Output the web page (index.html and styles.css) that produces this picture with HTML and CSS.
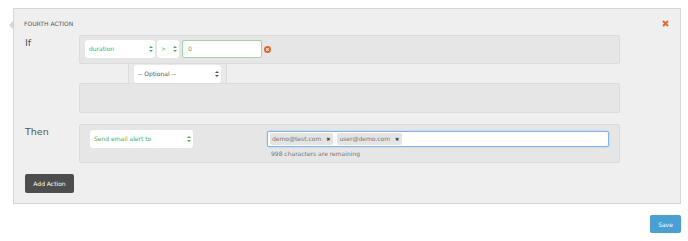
FILE: index.html
```html
<!DOCTYPE html>
<html lang="en">
<head>
  <meta charset="UTF-8">
  <title>Actions</title>
  <link rel="stylesheet" href="styles.css">
</head>
<body>
  <section class="action-panel">
    <div class="panel-head">
      <span class="panel-title">FOURTH ACTION</span>
      <span class="panel-close">
        <svg width="7" height="7" viewBox="0 0 7 7"><path d="M1 1L6 6M6 1L1 6" stroke="#e8672e" stroke-width="2"/></svg>
      </span>
    </div>

    <div class="rule-row">
      <div class="rule-label">If</div>
      <div class="rule-body">
        <div class="cond-box">
          <div class="select sel-field">duration<span class="arrows"></span></div>
          <div class="select sel-op">&gt;<span class="arrows"></span></div>
          <div class="value-input">0</div>
          <span class="remove-icon">
            <svg width="7" height="7" viewBox="0 0 8 8"><circle cx="4" cy="4" r="4" fill="#e8632b"/><path d="M2.6 2.6L5.4 5.4M5.4 2.6L2.6 5.4" stroke="#fff" stroke-width="1.2"/></svg>
          </span>
        </div>
        <div class="sub-row">
          <div class="select sel-optional">-- Optional --<span class="arrows grey"></span></div>
        </div>
        <div class="cond-box empty"></div>
      </div>
    </div>

    <div class="rule-row then-row">
      <div class="rule-label">Then</div>
      <div class="rule-body">
        <div class="then-box">
          <div class="select sel-action">Send email alert to<span class="arrows"></span></div>
          <div class="tags-col">
            <div class="tags-input">
              <span class="tag">demo@test.com <b>&#x2716;</b></span>
              <span class="tag">user@demo.com <b>&#x2716;</b></span>
            </div>
            <div class="help-text">998 characters are remaining</div>
          </div>
        </div>
      </div>
    </div>

    <button class="btn-dark">Add Action</button>
  </section>

  <div class="footer-bar">
    <button class="btn-save">Save</button>
  </div>
</body>
</html>
```

FILE: styles.css
```css
body {
  margin: 0;
  font-family: 'DejaVu Sans', Verdana, sans-serif;
  background: #fff;
  color: #555;
}
.action-panel {
  position: relative;
  margin: 8px 7px 0 13px;
  background: #efefef;
  border: 1px solid #d6d6d6;
  padding: 0 0 10px 10px;
}
.action-panel::before {
  content: '';
  position: absolute;
  left: -5px;
  top: 12px;
  border-top: 4px solid transparent;
  border-bottom: 4px solid transparent;
  border-right: 4px solid #d6d6d6;
}
.panel-head {
  display: flex;
  justify-content: space-between;
  align-items: center;
  padding: 10px 11px 6px 0;
  height: 10px;
}
.panel-title {
  font-size: 6px;
  color: #555;
  line-height: 10px;
}
.panel-close {
  display: flex;
  margin-top: -2px;
}
.rule-row {
  display: flex;
  align-items: flex-start;
}
.rule-label {
  width: 54px;
  padding: 2px 0 0 1px;
  font-size: 9.5px;
  line-height: 12px;
  color: #555;
}
.rule-body {
  width: 541px;
}
.cond-box {
  display: flex;
  align-items: center;
  height: 18px;
  padding: 4px 5px 5px;
  background: #e6e6e6;
  border: 1px solid #dcdcdc;
  border-radius: 2px;
}
.cond-box.empty {
  height: 18px;
  padding: 5px;
}
.select {
  position: relative;
  box-sizing: border-box;
  height: 18px;
  background: #fff;
  border-radius: 3px;
  font-size: 6px;
  line-height: 18px;
  color: #4caf50;
  padding-left: 4px;
}
.arrows {
  position: absolute;
  right: 4px;
  top: 6px;
  width: 0;
  height: 6px;
}
.arrows::before,
.arrows::after {
  content: '';
  position: absolute;
  left: -2px;
  border-left: 2px solid transparent;
  border-right: 2px solid transparent;
}
.arrows::before {
  top: 0;
  border-bottom: 2.5px solid #4caf50;
}
.arrows::after {
  bottom: 0;
  border-top: 2.5px solid #4caf50;
}
.arrows.grey::before { border-bottom-color: #555; }
.arrows.grey::after { border-top-color: #555; }
.sel-field { width: 70px; }
.sel-op { width: 22px; margin-left: 2px; }
.value-input {
  box-sizing: border-box;
  width: 80px;
  height: 18px;
  margin-left: 3px;
  padding-left: 5px;
  background: #fff;
  border: 1px solid #9fd5aa;
  border-radius: 2px;
  font-size: 6px;
  line-height: 16px;
  color: #4caf50;
}
.remove-icon {
  display: flex;
  margin-left: 2px;
}
.sub-row {
  box-sizing: border-box;
  width: 99px;
  height: 19px;
  margin-left: 49px;
  padding: 1px 5px 0;
  background: #e9e9e9;
  border-left: 1px solid #dcdcdc;
  border-right: 1px solid #dcdcdc;
}
.sel-optional {
  width: 87px;
  color: #555;
}
.then-row {
  margin-top: 11px;
}
.then-box {
  display: flex;
  align-items: flex-start;
  padding: 5px 10px 4px;
  background: #e6e6e6;
  border: 1px solid #dcdcdc;
  border-radius: 2px;
}
.sel-action {
  width: 103px;
  flex: none;
}
.tags-col {
  flex: 1;
  margin: 1px 0 0 74px;
}
.tags-input {
  display: flex;
  align-items: center;
  box-sizing: border-box;
  height: 16px;
  padding: 0 2px;
  gap: 4px;
  background: #fff;
  border: 1px solid #7fb6e6;
  border-radius: 2px;
  box-shadow: 0 0 2px rgba(102, 175, 233, 0.6);
}
.tag {
  height: 12px;
  padding: 0 3px 0 2px;
  background: #e4e4e4;
  border-radius: 2px;
  font-size: 6px;
  line-height: 12px;
  color: #777;
}
.tag b {
  font-size: 5px;
  color: #444;
  margin-left: 3px;
}
.help-text {
  margin-top: 2px;
  padding-left: 4px;
  font-size: 6px;
  line-height: 9px;
  color: #777;
}
.btn-dark {
  display: block;
  width: 49px;
  height: 19px;
  margin: 11px 0 0 1px;
  padding: 0;
  background: #4d4d4d;
  border: none;
  border-radius: 2px;
  color: #fff;
  font-family: 'DejaVu Sans', sans-serif;
  font-size: 6px;
}
.footer-bar {
  display: flex;
  justify-content: flex-end;
  padding: 11px 7px 0 0;
}
.btn-save {
  width: 31px;
  height: 18px;
  padding: 0;
  background: #4a9fd5;
  border: none;
  border-radius: 2px;
  color: #fff;
  font-family: 'DejaVu Sans', sans-serif;
  font-size: 6px;
}
```
